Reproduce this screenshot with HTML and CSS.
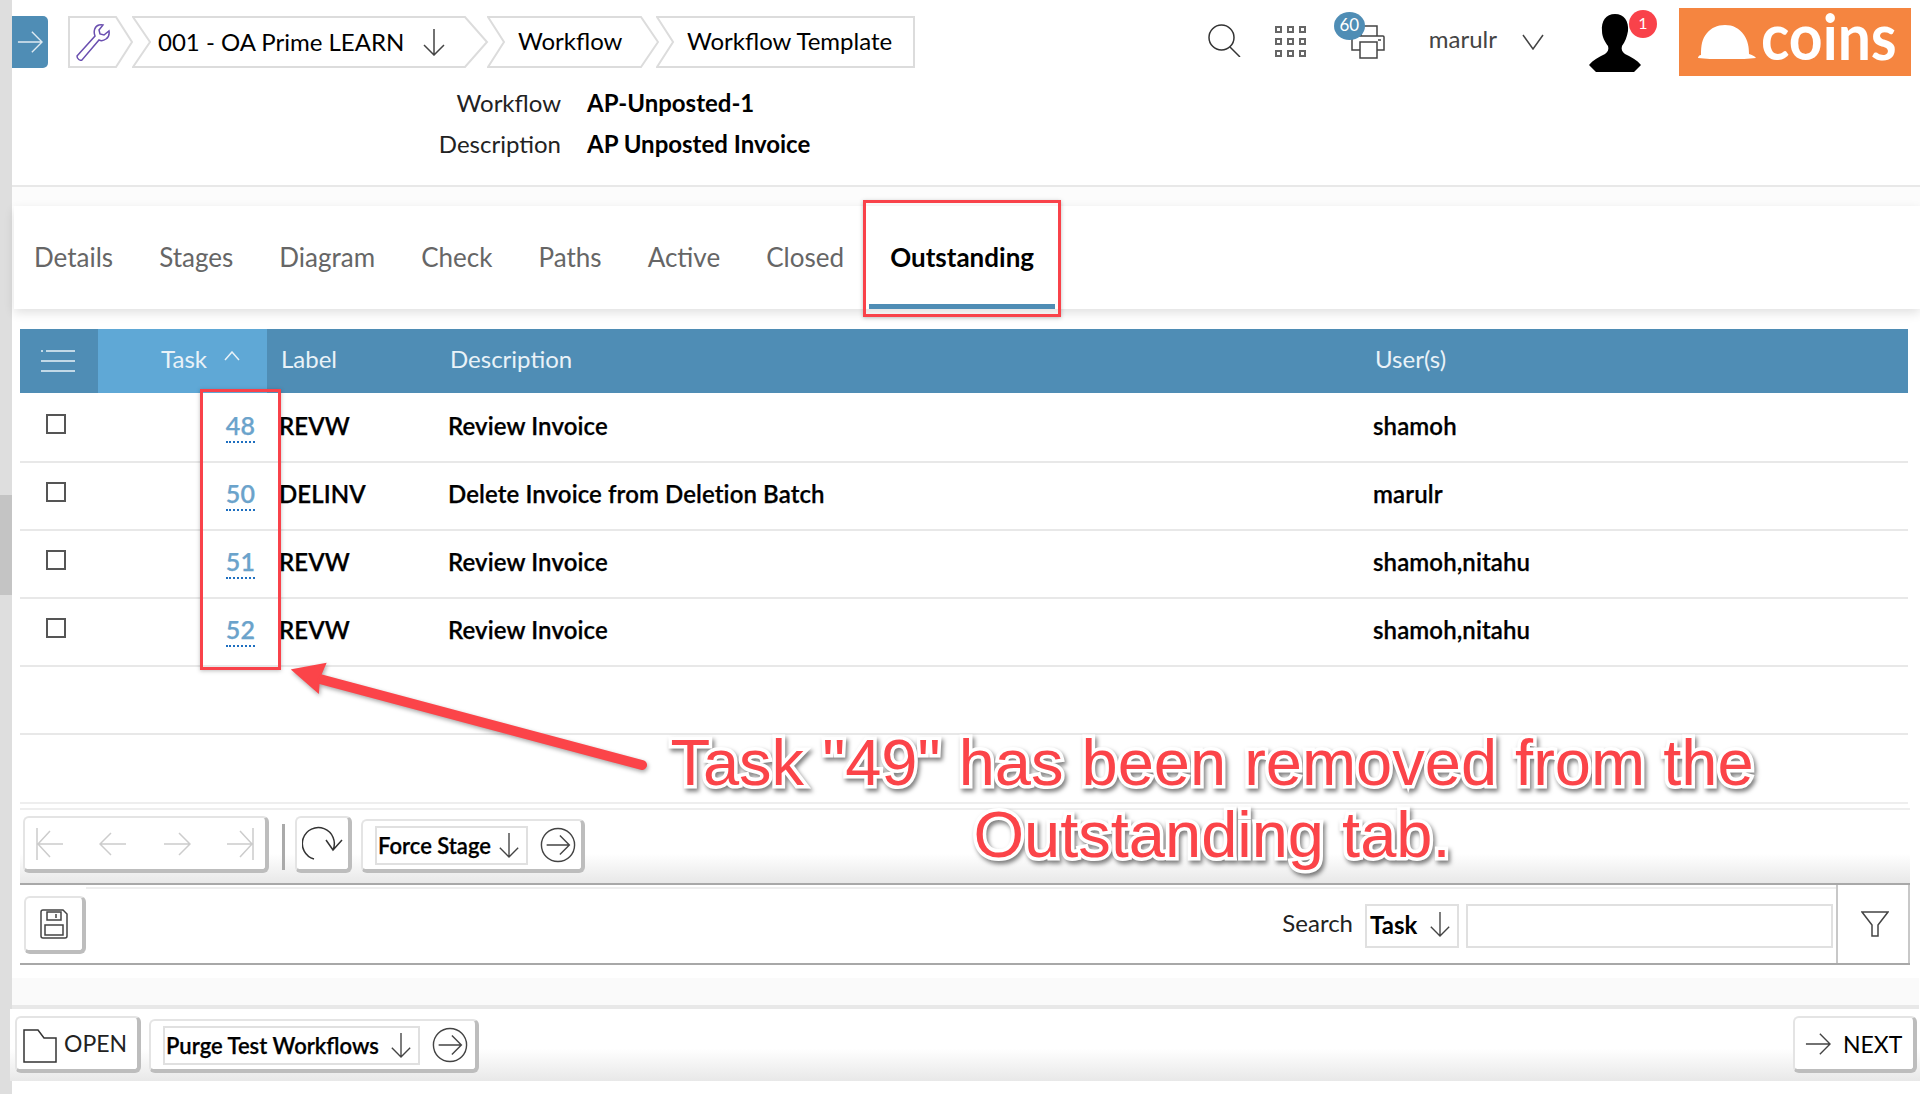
FILE: index.html
```html
<!doctype html>
<html>
<head>
    <meta charset="utf-8">
    <meta name="viewport" content="width=device-width, initial-scale=1">
    <title>Workflow Template</title>
    <link rel="stylesheet" href="styles.css">
</head>
<body>

<svg class="defs" width="0" height="0">
    <symbol id="down" viewBox="0 0 24 28"><path d="M12 1v26M2 17l10 10 10-10"/></symbol>
    <symbol id="right" viewBox="0 0 28 24"><path d="M1 12h26M16 1l11 11-11 11"/></symbol>
    <symbol id="left" viewBox="0 0 28 24"><path d="M27 12H1M12 1L1 12l11 11"/></symbol>
    <symbol id="first" viewBox="0 0 28 34"><path d="M1 1v32M27 17H2M14 4L2 17l12 13"/></symbol>
    <symbol id="last" viewBox="0 0 28 34"><path d="M27 1v32M1 17h25M14 4l12 13-12 13"/></symbol>
    <symbol id="go" viewBox="0 0 38 38"><circle cx="19" cy="19" r="17.5"/><path d="M7 19h24M21 9l10 10-10 10"/></symbol>
</svg>

<div class="page">
    <div class="rail"><div class="rail-thumb"></div></div>

    <div class="main">
        <header class="topbar">
            <button class="back"><svg class="ico ico-back"><use href="#right"/></svg></button>
            <nav class="crumbs">
                <div class="crumb crumb-tool">
                    <svg class="crumb-bg" viewBox="0 0 67 52" preserveAspectRatio="none"><path d="M1 1h47l16 25-16 25H1z"/></svg>
                    <svg class="wrench" viewBox="0 0 38 38"><path d="M2 33l18-20c-2-5 0-10 4-11 2-.5 3-.3 4 0l-4 5 1 4 4 1 5-4c.5 3 0 6-3 8-2 1.500-5 2-7 1L7 37c-2 1-5-1-5-4z"/></svg>
                </div>
                <div class="crumb crumb-co">
                    <svg class="crumb-bg" viewBox="0 0 358 52" preserveAspectRatio="none"><path d="M1 1h332l22 25-22 25H1l17-25z"/></svg>
                    <span>001 - OA Prime LEARN</span>
                    <svg class="ico ico-down"><use href="#down"/></svg>
                </div>
                <div class="crumb crumb-wf">
                    <svg class="crumb-bg" viewBox="0 0 172 52" preserveAspectRatio="none"><path d="M1 1h153l17 25-17 25H1l16-25z"/></svg>
                    <span>Workflow</span>
                </div>
                <div class="crumb crumb-tpl">
                    <svg class="crumb-bg" viewBox="0 0 258 52" preserveAspectRatio="none"><path d="M1 1h256v50H1l16-25z"/></svg>
                    <span>Workflow Template</span>
                </div>
            </nav>

            <div class="tools">
                <svg class="t-search" viewBox="0 0 33 33"><circle cx="13.500" cy="13.500" r="12.500"/><path d="M22 23l10 10"/></svg>
                <div class="t-grid">
                    <i></i><i></i><i></i><i></i><i></i><i></i><i></i><i></i><i></i>
                </div>
                <div class="t-print">
                    <svg viewBox="0 0 34 34"><path d="M10 11V1h16v10M4 11h28a1 1 0 0 1 1 1v13h-7M9 25H1V14c0-2 1-3 3-3M9 17h17v16H9zM27 15h3"/></svg>
                    <span class="badge-60">60</span>
                </div>
                <span class="t-user">marulr</span>
                <svg class="t-chev" viewBox="0 0 22 16"><path d="M1 1l10 14L21 1"/></svg>
                <div class="t-avatar">
                    <svg viewBox="0 0 52 58"><path d="M26 0c9 0 14 7 13 17-1 6-3 11-6 15-1 3 0 6 3 8 6 3 12 6 16 11l-7 7H7l-7-7c4-5 10-8 16-11 3-2 4-5 3-8-3-4-6-9-6-15C12 7 17 0 26 0z"/></svg>
                    <span class="badge-1">1</span>
                </div>
                <div class="logo">
                    <svg viewBox="0 0 58 34" preserveAspectRatio="none"><path d="M0 33c0-1 1-3 3-3 0-10 1-16 6-22 4-5 10-8 18-8 8 0 14 3 19 10 4 6 5 12 5 19 3 1 6 2 7 4-18 2-40 2-58 0z"/></svg>
                    <span>coins</span>
                </div>
            </div>
        </header>

        <section class="record">
            <div class="record-row"><label>Workflow</label><b>AP-Unposted-1</b></div>
            <div class="record-row"><label>Description</label><b>AP Unposted Invoice</b></div>
        </section>

        <div class="gap-top"></div>

        <nav class="tabs">
            <a>Details</a>
            <a>Stages</a>
            <a>Diagram</a>
            <a>Check</a>
            <a>Paths</a>
            <a>Active</a>
            <a>Closed</a>
            <a class="active">Outstanding</a>
        </nav>

        <section class="grid">
            <div class="grid-head">
                <div class="col-menu">
                    <svg viewBox="0 0 34 22"><path d="M5 1h29M0 11h34M0 21h34M0 1h2"/></svg>
                </div>
                <div class="col-task">Task <svg viewBox="0 0 16 10"><path d="M1 9l7-8 7 8"/></svg></div>
                <div class="col-label">Label</div>
                <div class="col-desc">Description</div>
                <div class="col-user">User(s)</div>
            </div>
            <div class="grid-row">
                <div class="col-menu"><span class="check"></span></div>
                <div class="col-task"><a>48</a></div>
                <div class="col-label">REVW</div>
                <div class="col-desc">Review Invoice</div>
                <div class="col-user">shamoh</div>
            </div>
            <div class="grid-row">
                <div class="col-menu"><span class="check"></span></div>
                <div class="col-task"><a>50</a></div>
                <div class="col-label">DELINV</div>
                <div class="col-desc">Delete Invoice from Deletion Batch</div>
                <div class="col-user">marulr</div>
            </div>
            <div class="grid-row">
                <div class="col-menu"><span class="check"></span></div>
                <div class="col-task"><a>51</a></div>
                <div class="col-label">REVW</div>
                <div class="col-desc">Review Invoice</div>
                <div class="col-user">shamoh,nitahu</div>
            </div>
            <div class="grid-row">
                <div class="col-menu"><span class="check"></span></div>
                <div class="col-task"><a>52</a></div>
                <div class="col-label">REVW</div>
                <div class="col-desc">Review Invoice</div>
                <div class="col-user">shamoh,nitahu</div>
            </div>
            <div class="grid-row"></div>
        </section>

        <div class="toolbar">
            <div class="btn pager">
                <svg class="ico ico-first"><use href="#first"/></svg>
                <svg class="ico ico-pg"><use href="#left"/></svg>
                <svg class="ico ico-pg"><use href="#right"/></svg>
                <svg class="ico ico-first"><use href="#last"/></svg>
            </div>
            <span class="divider"></span>
            <div class="btn refresh">
                <svg viewBox="0 0 42 40"><path d="M12 34A16 16 0 1 1 31 25M24 15l7 10 9-10"/></svg>
            </div>
            <div class="btn action force">
                <div class="select"><b>Force Stage</b><svg class="ico ico-sel"><use href="#down"/></svg></div>
                <svg class="ico ico-go"><use href="#go"/></svg>
            </div>
        </div>

        <div class="searchbar">
            <div class="btn save">
                <svg viewBox="0 0 28 30"><path d="M1 3a2 2 0 0 1 2-2h20l4 4v22a2 2 0 0 1-2 2H3a2 2 0 0 1-2-2zM7 3h14v8H7zM16 5v4M5 16h18v10H5z"/></svg>
            </div>
            <div class="search-fields">
                <span class="search-label">Search</span>
                <div class="select select-task"><b>Task</b><svg class="ico ico-sel"><use href="#down"/></svg></div>
                <div class="search-input"></div>
            </div>
            <div class="filter">
                <svg viewBox="0 0 28 26"><path d="M1 1h26L17 14v11h-6V14z"/></svg>
            </div>
        </div>

        <div class="gap-bottom"></div>

        <footer class="footer">
            <div class="btn open">
                <svg viewBox="0 0 34 34"><path d="M1 33V1h14l6 8h12v24z"/></svg>
                <span>OPEN</span>
            </div>
            <div class="btn action purge">
                <div class="select"><b>Purge Test Workflows</b><svg class="ico ico-sel"><use href="#down"/></svg></div>
                <svg class="ico ico-go"><use href="#go"/></svg>
            </div>
            <div class="btn next">
                <svg class="ico ico-next"><use href="#right"/></svg>
                <span>NEXT</span>
            </div>
        </footer>
    </div>
</div>

<!-- callouts drawn over the screenshot -->
<div class="mark mark-tab"></div>
<div class="mark mark-tasks"></div>
<svg class="arrow" viewBox="0 0 360 110">
    <path class="arrow-line" d="M352 105L26 18"/>
    <path class="arrow-head" d="M3 10L35 4 29 18 28 32z"/>
</svg>
<div class="note">Task "49" has been removed from the<br>Outstanding tab.</div>

</body>
</html>
```

FILE: styles.css
```css
* {
    box-sizing: border-box;
}

html, body {
    margin: 0;
    padding: 0;
    height: 1094px;
    overflow: hidden;
}

body {
    font-family: Lato, "Open Sans", sans-serif;
    font-size: 24px;
    color: #000;
    background: #fff;
    position: relative;
}

.defs {
    position: absolute;
}

svg {
    fill: none;
    stroke: #444;
    stroke-width: 1.5;
    display: block;
}

.ico {
    flex: none;
}

.page {
    display: flex;
    height: 1094px;
}

.rail {
    width: 12px;
    flex: none;
    background: #dedede;
    padding-top: 495px;
}

.rail-thumb {
    height: 100px;
    background: #c4c4c4;
}

.main {
    flex: 1;
    min-width: 0;
}

/* top bar */
.topbar {
    height: 82px;
    display: flex;
    align-items: flex-start;
    position: relative;
}

.back {
    width: 36px;
    height: 52px;
    margin-top: 16px;
    border: none;
    padding: 0;
    background: #4f8db5;
    border-radius: 0 5px 5px 0;
    display: flex;
    align-items: center;
    justify-content: center;
}

.ico-back {
    width: 26px;
    height: 24px;
    stroke: #dfeaf2;
}

.crumbs {
    display: flex;
    margin: 16px 0 0 20px;
    height: 52px;
}

.crumb {
    position: relative;
    height: 52px;
    display: flex;
    align-items: center;
    font-size: 24px;
}

.crumb > span {
    position: relative;
    top: -1px;
}

.crumb-wf > span,
.crumb-tpl > span {
    top: -2px;
}

.crumb-bg {
    position: absolute;
    left: 0;
    top: 0;
    width: 100%;
    height: 100%;
    stroke: #dcdcdc;
    stroke-width: 2;
}

.crumb-tool {
    width: 67px;
    padding-left: 7px;
}

.wrench {
    position: relative;
    width: 38px;
    height: 38px;
    stroke: #6a4fb0;
}

.crumb-co {
    width: 358px;
    margin-left: -3px;
    padding-left: 26px;
}

.ico-down {
    position: relative;
    width: 24px;
    height: 28px;
    margin-left: 18px;
}

.crumb-wf {
    width: 172px;
    margin-left: -3px;
    padding-left: 31px;
}

.crumb-tpl {
    width: 259px;
    margin-left: -3px;
    padding-left: 31px;
}

.tools {
    position: absolute;
    left: 0;
    right: 0;
    top: 0;
    height: 82px;
    pointer-events: none;
    display: flex;
    justify-content: flex-end;
    align-items: flex-start;
}

.t-search {
    width: 33px;
    height: 33px;
    margin-top: 24px;
    stroke: #333;
}

.t-grid {
    width: 31px;
    height: 31px;
    margin: 26px 0 0 34px;
    display: grid;
    grid-template-columns: repeat(3, 7px);
    grid-template-rows: repeat(3, 7px);
    justify-content: space-between;
    align-content: space-between;
}

.t-grid i {
    border: 2px solid #666;
}

.t-print {
    position: relative;
    width: 51px;
    height: 50px;
    margin: 10px 0 0 28px;
}

.t-print svg {
    position: absolute;
    right: 0;
    top: 15px;
    width: 34px;
    height: 34px;
}

.badge-60 {
    position: absolute;
    left: 0;
    top: 2px;
    width: 31px;
    height: 28px;
    border-radius: 50%;
    background: #4f8db5;
    color: #fff;
    font-size: 17px;
    line-height: 26px;
    text-align: center;
}

.t-user {
    margin: 23px 0 0 44px;
    color: #444;
    font-size: 24px;
    line-height: 32px;
}

.t-chev {
    width: 22px;
    height: 16px;
    margin: 34px 0 0 25px;
}

.t-avatar {
    position: relative;
    width: 68px;
    height: 62px;
    margin: 10px 0 0 45px;
}

.t-avatar svg {
    position: absolute;
    left: 0;
    top: 4px;
    width: 52px;
    height: 58px;
    fill: #000;
    stroke: none;
}

.badge-1 {
    position: absolute;
    right: 0;
    top: 0;
    width: 28px;
    height: 28px;
    border-radius: 50%;
    background: #f9424a;
    color: #fff;
    font-size: 16px;
    line-height: 26px;
    text-align: center;
}

.logo {
    width: 232px;
    height: 68px;
    margin: 8px 9px 0 22px;
    background: #f58540;
    color: #fff;
    display: flex;
    align-items: center;
    padding-left: 19px;
}

.logo svg {
    width: 58px;
    height: 34px;
    flex: none;
    fill: #fff;
    stroke: none;
    margin-top: -1px;
}

.logo span {
    display: inline-block;
    font-size: 64px;
    font-weight: 700;
    line-height: 60px;
    margin: -12px 0 0 5px;
    transform: scaleX(0.92);
    transform-origin: left center;
}

/* record header */
.record {
    height: 106px;
    border-bottom: 2px solid #e8e8e8;
}

.record-row {
    display: flex;
    align-items: center;
    height: 42px;
    margin-top: -1px;
}

.record-row label {
    width: 549px;
    text-align: right;
    color: #222;
}

.record-row b {
    margin-left: 26px;
    font-weight: 700;
}

.gap-top {
    height: 19px;
    background: #fcfcfc;
}

/* tabs */
.tabs {
    height: 103px;
    margin-left: 2px;
    display: flex;
    padding-left: 20px;
    background: #fff;
    box-shadow: 0 4px 10px rgba(0, 0, 0, 0.12);
    font-size: 26px;
    color: #666;
    position: relative;
}

.tabs a {
    padding: 33px 0 0;
    margin-right: 46.100px;
    line-height: 36px;
}

.tabs a.active {
    color: #000;
    font-weight: 700;
    margin: 0 0 0 -21px;
    padding: 33px 21px 0;
    border-bottom: 5px solid #4f8db5;
}

/* table */
.grid {
    margin: 20px 12px 4px 8px;
    height: 475px;
    border-bottom: 2px solid #eee;
}

.grid-head, .grid-row {
    display: flex;
    align-items: center;
}

.grid-head {
    height: 64px;
    background: #4f8db5;
    color: #e9f2f8;
    font-size: 24px;
    margin-bottom: 2px;
}

.grid-row {
    height: 68px;
    padding-bottom: 6px;
    border-bottom: 2px solid #e8e8e8;
    font-weight: 600;
    letter-spacing: 0.1px;
    -webkit-text-stroke: 0.25px #000;
}

.col-menu {
    width: 78px;
    flex: none;
    height: 100%;
    display: flex;
    align-items: center;
}

.col-menu svg {
    width: 34px;
    height: 22px;
    margin-left: 21px;
    stroke: #e9f2f8;
}

.check {
    width: 20px;
    height: 20px;
    margin: -2px 0 0 26px;
    border: 2px solid #555;
    background: #fff;
}

.col-task {
    width: 161px;
    flex: none;
    text-align: right;
}

.grid-head .col-task {
    width: 169px;
    height: 100%;
    background: #5fa8d6;
    display: flex;
    align-items: center;
    justify-content: flex-end;
    padding: 0 27px 6px 0;
    gap: 17px;
}

.col-task svg {
    width: 16px;
    height: 10px;
    stroke: #e9f2f8;
    margin-top: -4px;
}

.col-task a {
    color: #6ba3cb;
    font-weight: 600;
    font-size: 25px;
    border-bottom: 2px dotted #1e6fc0;
    padding-bottom: 1px;
    -webkit-text-stroke: 0.25px #6ba3cb;
}

.col-label {
    flex: none;
}

.col-desc {
    width: 925px;
    flex: none;
}

.col-user {
    flex: 1;
}

.grid-head .col-label {
    width: 183px;
    padding: 0 0 6px 14px;
}

.grid-head .col-desc,
.grid-head .col-user {
    padding-bottom: 6px;
}

.grid-row .col-task {
    padding-right: 19px;
    width: 176px;
}

.grid-row .col-label {
    margin-left: 5px;
    width: 169px;
}

/* toolbars */
.btn {
    background: #fff;
    border: 2px solid #e4e4e4;
    border-bottom: 4px solid #bdbdbd;
    border-right: 4px solid #bdbdbd;
    border-radius: 6px;
    display: flex;
    align-items: center;
    flex: none;
}

.toolbar {
    margin: 0 10px 0 8px;
    height: 77px;
    border-top: 2px solid #eee;
    border-bottom: 2px solid #a8a8a8;
    display: flex;
    align-items: flex-start;
    background: linear-gradient(#fff 60%, #e8e8e8);
    padding: 6px 0 0 3px;
}

.pager {
    width: 246px;
    height: 57px;
    justify-content: space-between;
    padding: 1px 11px 0 11px;
}

.ico-first {
    width: 28px;
    height: 34px;
    stroke: #ccc;
}

.ico-pg {
    width: 28px;
    height: 24px;
    stroke: #ccc;
}

.divider {
    width: 3px;
    height: 46px;
    margin: 8px 10px 0 13px;
    background: #aaa;
}

.refresh {
    width: 57px;
    height: 57px;
    justify-content: center;
    padding-top: 3px;
}

.refresh svg {
    width: 42px;
    height: 40px;
    stroke: #333;
}

.action {
    height: 54px;
    margin-top: 3px;
    padding-left: 12px;
}

.force {
    width: 224px;
    margin-left: 9px;
}

.purge {
    width: 330px;
    margin-left: 8px;
}

.select {
    height: 39px;
    border: 2px solid #e0e0e0;
    display: flex;
    align-items: center;
    justify-content: space-between;
    padding: 0 6px 0 1px;
    font-size: 22px;
    flex: none;
}

.select b {
    font-weight: 600;
    -webkit-text-stroke: 0.25px #000;
}

.force .select {
    width: 153px;
}

.purge .select {
    width: 257px;
}

.ico-sel {
    width: 22px;
    height: 26px;
}

.ico-go {
    width: 36px;
    height: 36px;
    margin-left: 12px;
}

.searchbar {
    margin: 0 10px 0 8px;
    height: 80px;
    border-bottom: 2px solid #a8a8a8;
    display: flex;
    align-items: flex-start;
}

.save {
    width: 62px;
    height: 58px;
    margin: 11px 0 0 4px;
    justify-content: center;
}

.save svg {
    width: 28px;
    height: 30px;
}

.search-fields {
    flex: 1;
    height: 77px;
    border-top: 2px solid #eee;
    margin-top: 2px;
    display: flex;
    align-items: center;
    justify-content: flex-end;
    padding-right: 3px;
}

.search-label {
    color: #222;
    margin: -8px 0 0;
}

.select-task {
    width: 94px;
    height: 44px;
    margin: -2px 0 0 12px;
    padding-left: 3px;
    font-size: 24px;
    padding-bottom: 3px;
}

.select-task b {
    font-weight: 700;
    -webkit-text-stroke: 0;
}

.search-input {
    width: 367px;
    height: 44px;
    margin: -2px 0 0 7px;
    border: 2px solid #e0e0e0;
}

.filter {
    width: 74px;
    height: 78px;
    border-left: 2px solid #c8c8c8;
    border-right: 2px solid #c8c8c8;
    padding-left: 3px;
    display: flex;
    align-items: center;
    justify-content: center;
}

.filter svg {
    width: 28px;
    height: 26px;
}

.gap-bottom {
    height: 44px;
    background: linear-gradient(#fff 13px, #fafafa 13px);
    border-bottom: 4px solid #e8e8e8;
    margin-right: 1px;
}

.footer {
    height: 72px;
    margin-left: -2px;
    display: flex;
    align-items: flex-start;
    padding: 7px 3px 0 5px;
    background: linear-gradient(#fff 55%, #e8e8e8);
}

.open {
    width: 126px;
    height: 57px;
    padding-left: 6px;
    font-size: 23px;
    color: #222;
}

.open svg {
    width: 34px;
    height: 34px;
    margin: 4px 7px 0 0;
    stroke: #333;
}

.open span {
    margin-top: -2px;
}

.purge {
    margin-top: 3px;
}

.next {
    width: 124px;
    height: 57px;
    margin-left: auto;
    padding-left: 10px;
    font-size: 23px;
}

.ico-next {
    width: 26px;
    height: 24px;
    margin-right: 12px;
}

/* callouts */
.mark {
    position: absolute;
    border: 3px solid #f9424a;
    box-shadow: 0 1px 4px rgba(0, 0, 0, 0.25);
}

.mark-tab {
    left: 863px;
    top: 200px;
    width: 198px;
    height: 117px;
}

.mark-tasks {
    left: 200px;
    top: 389px;
    width: 81px;
    height: 281px;
}

.arrow {
    position: absolute;
    left: 290px;
    top: 660px;
    width: 360px;
    height: 110px;
    overflow: visible;
    filter: drop-shadow(1px 2px 2px rgba(0, 0, 0, 0.35));
}

.arrow-line {
    stroke: #fb4449;
    stroke-width: 10;
    stroke-linecap: round;
}

.arrow-head {
    fill: #fb4449;
    stroke: #fb4449;
    stroke-width: 2;
}

.note {
    position: absolute;
    left: 600px;
    top: 727px;
    width: 1224px;
    text-align: center;
    font-family: "Liberation Sans", Arial, sans-serif;
    font-size: 65px;
    line-height: 72px;
    color: #fb4449;
    -webkit-text-stroke: 7px #fff;
    paint-order: stroke fill;
    filter: drop-shadow(2px 3px 2px rgba(0, 0, 0, 0.5));
}
```
